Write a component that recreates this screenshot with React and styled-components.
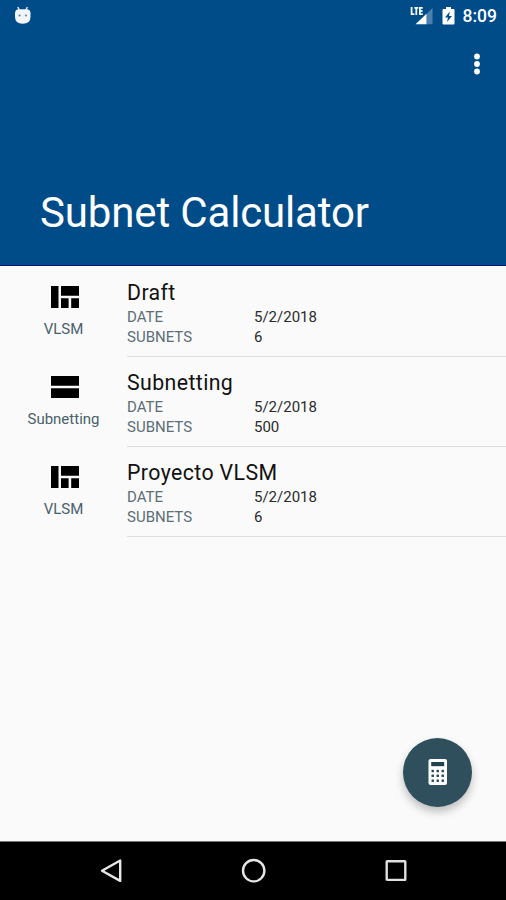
import React from 'react';
import styled, { createGlobalStyle } from 'styled-components';

const projects = [
  { name: 'Draft', type: 'VLSM', date: '5/2/2018', subnets: 6 },
  { name: 'Subnetting', type: 'Subnetting', date: '5/2/2018', subnets: 500 },
  { name: 'Proyecto VLSM', type: 'VLSM', date: '5/2/2018', subnets: 6 },
];

const DebugIcon = () => (
  <svg width='18' height='20' viewBox='0 0 18 20'>
    <path d='M3.8 1l1.5 3M13.4 1l-1.5 3' stroke='#e9eef6' strokeWidth='1.4' />
    <path d='M1 6.5Q1.3 3.8 4 3.3h9.5q2.7.5 3 3.2v4.2q0 7-7.75 7T1 10.7z' fill='#f2f5fa' />
    <circle cx='5.6' cy='9.5' r='1' fill='#4a7bab' />
    <circle cx='12' cy='9.5' r='1' fill='#4a7bab' />
  </svg>
);

const SignalIcon = () => (
  <svg width='24' height='20' viewBox='0 0 24 20'>
    <path d='M22.500 2v16.300h-6V8z' fill='#4a80ae' />
    <path d='M16.500 7.700v10.600H5.500z' fill='#fff' />
    <path d='M1.600 1v7.200h2.800M4.300 1.900h4M6.300 1.900v7M12.800 1.900h-2.900v6.300h2.900M9.900 5h2.600' fill='none' stroke='#f4f7fb' strokeWidth='1.8' />
  </svg>
);

const BatteryIcon = () => (
  <svg width='14' height='20' viewBox='0 0 14 20'>
    <path d='M4 1h5v2h2.5q1 0 1 1v13.5q0 1-1 1h-10q-1 0-1-1V4q0-1 1-1H4z' fill='#fff' />
    <path d='M7.8 5.5L3 11.5h3L5 16l5-6H7z' fill='#004c89' />
  </svg>
);

const MoreIcon = () => (
  <svg width='8' height='24' viewBox='0 0 8 24'>
    <circle cx='4' cy='4.5' r='2.9' fill='#fff' />
    <circle cx='4' cy='12' r='2.9' fill='#fff' />
    <circle cx='4' cy='19.5' r='2.9' fill='#fff' />
  </svg>
);

const VlsmIcon = () => (
  <svg width='28' height='22' viewBox='0 0 28 22'>
    <path d='M0 0h7.5v22H0zM10 0h18v9.7H10zM10 12.3h7.6V22H10zM20.2 12.3H28V22h-7.8z' fill='#000' />
  </svg>
);

const SubnettingIcon = () => (
  <svg width='28' height='22' viewBox='0 0 28 22'>
    <path d='M0 0h28v9.7H0zM0 12.3h28V22H0z' fill='#000' />
  </svg>
);

const keyRows = [12.2, 17, 21.8];
const keyColumns = [4.7, 9.7, 14.7];

const CalculatorIcon = () => (
  <svg width='20' height='26' viewBox='0 0 20 26'>
    <rect x='.5' y='0' width='18.5' height='26' rx='2' fill='#fff' />
    <rect x='3.2' y='3' width='13' height='4.2' fill='#23424f' />
    {keyRows.map(y => keyColumns.map(x => (
      <rect key={`${x}-${y}`} x={x - 1.2} y={y - 1.4} width='2.5' height='2.5' rx='.6' fill='#2f4c59' />
    )))}
  </svg>
);

const Project = ({ project }) => (
  <Row>
    <TypeColumn>
      {project.type === 'VLSM' ? <VlsmIcon /> : <SubnettingIcon />}
      <TypeLabel>{project.type}</TypeLabel>
    </TypeColumn>
    <Details>
      <Name>{project.name}</Name>
      <Field>
        <FieldLabel>DATE</FieldLabel>
        <FieldValue>{project.date}</FieldValue>
      </Field>
      <Field>
        <FieldLabel>SUBNETS</FieldLabel>
        <FieldValue>{project.subnets}</FieldValue>
      </Field>
    </Details>
  </Row>
);

const App = () => (
  <React.Fragment>
    <GlobalStyle />
    <Screen>
      <Header>
        <StatusBar>
          <DebugIcon />
          <StatusIcons>
            <SignalIcon />
            <BatteryIcon />
            <Clock>8:09</Clock>
          </StatusIcons>
        </StatusBar>
        <Toolbar>
          <MenuButton aria-label='More options'><MoreIcon /></MenuButton>
        </Toolbar>
        <Title>Subnet Calculator</Title>
      </Header>
      <List>
        {projects.map(project => <Project key={project.name} project={project} />)}
      </List>
      <Fab aria-label='Calculate'><CalculatorIcon /></Fab>
      <NavBar>
        <svg width='26' height='28' viewBox='0 0 26 28'>
          <path d='M22.2 3.5v20.4L4 13.7z' fill='none' stroke='#e6e6e6' strokeWidth='2.4' strokeLinejoin='round' />
        </svg>
        <svg width='26' height='28' viewBox='0 0 26 28'>
          <circle cx='12.7' cy='13.7' r='10.7' fill='none' stroke='#e6e6e6' strokeWidth='2.4' />
        </svg>
        <svg width='26' height='28' viewBox='0 0 26 28'>
          <rect x='3.7' y='4.3' width='18.6' height='18.6' rx='.5' fill='none' stroke='#e0e0e0' strokeWidth='2.4' />
        </svg>
      </NavBar>
    </Screen>
  </React.Fragment>
);

const GlobalStyle = createGlobalStyle`
  body {
    margin: 0;
    font-family: Roboto, 'Liberation Sans', sans-serif;
  }
  * {
    box-sizing: border-box;
  }
  svg {
    display: block;
    flex-shrink: 0;
  }
`;

const Screen = styled.div`
  position: relative;
  display: flex;
  flex-direction: column;
  width: 506px;
  height: 900px;
  overflow: hidden;
  background-color: #fafafa;
`;

const Header = styled.header`
  display: flex;
  flex-direction: column;
  height: 266px;
  flex-shrink: 0;
  background-color: #004c89;
  border-bottom: 1px solid #00127c;
  color: #fff;
`;

const StatusBar = styled.div`
  display: flex;
  align-items: center;
  justify-content: space-between;
  height: 31px;
  padding: 0 9px 0 14px;
`;

const StatusIcons = styled.div`
  display: flex;
  align-items: center;
  gap: 8px;
`;

const Clock = styled.span`
  font-size: 17.5px;
  font-weight: 500;
  line-height: 20px;
  margin-left: -1px;
`;

const Toolbar = styled.div`
  display: flex;
  justify-content: flex-end;
  padding: 21px 25px 0 0;
`;

const MenuButton = styled.button`
  padding: 0;
  border: none;
  background: none;
`;

const Title = styled.h1`
  margin: auto 0 27px 40px;
  font-size: 42px;
  font-weight: 400;
  line-height: 50px;
  letter-spacing: -0.15px;
`;

const List = styled.main`
  flex: 1;
  padding-top: 1px;
`;

const Row = styled.div`
  display: flex;
  height: 90px;
`;

const TypeColumn = styled.div`
  display: flex;
  flex-direction: column;
  align-items: center;
  width: 127px;
  padding-top: 19px;

  svg {
    margin-left: 2px;
  }
`;

const TypeLabel = styled.span`
  margin-top: 11px;
  font-size: 15px;
  line-height: 20px;
  color: #49616b;
`;

const Details = styled.div`
  flex: 1;
  padding-top: 12px;
  border-bottom: 1px solid #dedede;
`;

const Name = styled.div`
  margin-bottom: 1px;
  font-size: 21.3px;
  line-height: 27px;
  letter-spacing: 0.4px;
  color: #111;
`;

const Field = styled.div`
  display: flex;
  font-size: 15px;
  line-height: 20px;
`;

const FieldLabel = styled.span`
  width: 127px;
  color: #5c6e76;
`;

const FieldValue = styled.span`
  color: #2b2b2b;
`;

const Fab = styled.button`
  position: absolute;
  right: 34px;
  bottom: 93px;
  display: flex;
  align-items: center;
  justify-content: center;
  width: 69px;
  height: 69px;
  padding: 0 0 1px;
  border: none;
  border-radius: 50%;
  background-color: #2f4f5d;
  box-shadow: 0 5px 9px rgba(0, 0, 0, 0.24);
`;

const NavBar = styled.nav`
  display: flex;
  align-items: center;
  justify-content: space-between;
  height: 59px;
  padding: 0 97px 0 98px;
  border-top: 1px solid #777;
  background-color: #000;
`;

export default App;
